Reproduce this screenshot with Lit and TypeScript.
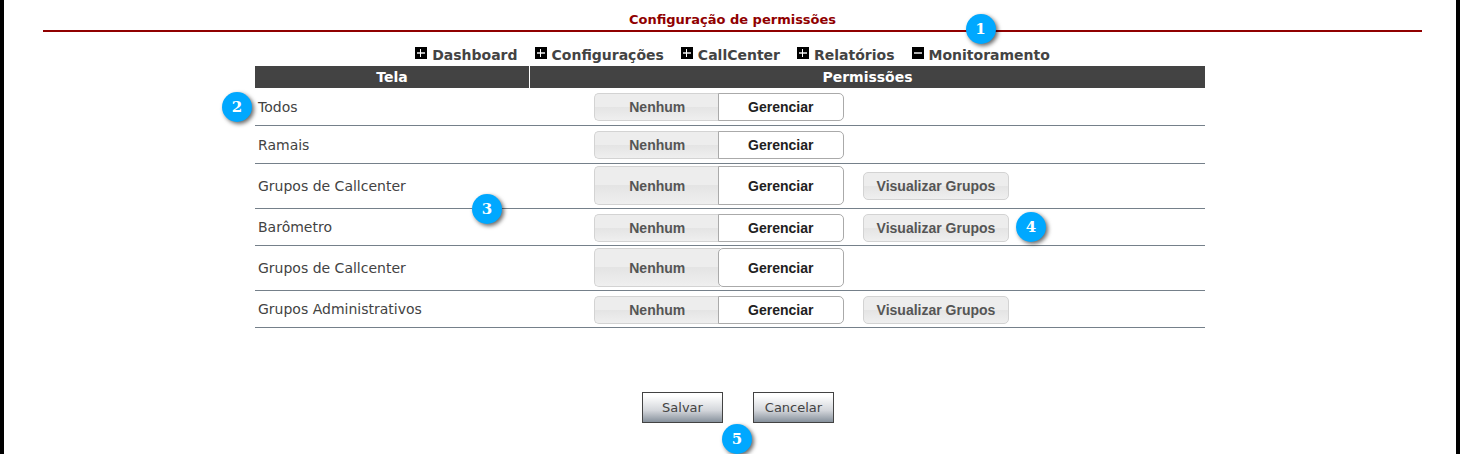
import { LitElement, html, svg, css, nothing } from "lit";
import { customElement, property, state } from "lit/decorators.js";
import { classMap } from "lit/directives/class-map.js";

interface Row {
  id: string;
  label: string;
  groups?: boolean;
  size?: "compact" | "tall";
  detached?: boolean;
  mark?: number;
}

const TABS = ["Dashboard", "Configurações", "CallCenter", "Relatórios", "Monitoramento"];

const ROWS: Row[] = [
  { id: "todos", label: "Todos", mark: 2 },
  { id: "ramais", label: "Ramais" },
  { id: "callcenter", label: "Grupos de Callcenter", size: "tall", groups: true, mark: 3 },
  { id: "barometro", label: "Barômetro", size: "compact", groups: true, mark: 4 },
  { id: "barometro-grupos", label: "Grupos de Callcenter", size: "tall", detached: true },
  { id: "administrativos", label: "Grupos Administrativos", size: "compact", groups: true },
];

@customElement("step-mark")
export class StepMark extends LitElement {
  @property({ type: Number }) value = 1;

  static styles = css`
    :host {
      display: block;
      width: 30px;
      height: 30px;
      border-radius: 50%;
      background: #00a8ff;
      box-shadow: 2px 2px 4px rgba(0, 0, 0, 0.6);
      color: #fff;
      font: bold 15px/30px "DejaVu Serif", serif;
      text-align: center;
    }
  `;

  render() {
    return html`${this.value}`;
  }
}

@customElement("permission-toggle")
export class PermissionToggle extends LitElement {
  @property() name = "";
  @property({ type: Boolean }) tall = false;
  @property({ type: Boolean }) detached = false;
  @state() private value = "Gerenciar";

  static styles = css`
    :host {
      display: block;
    }
    .set {
      display: flex;
      width: 250px;
      height: 28px;
      margin: 0;
      padding: 0;
      border: 0;
    }
    .set.tall {
      height: 39px;
    }
    .option {
      position: relative;
      display: flex;
      flex: 1;
      align-items: center;
      justify-content: center;
      box-sizing: border-box;
      border: 1px solid #d3d3d3;
      background: linear-gradient(#ededed 50%, #e4e4e4 50%, #efefef);
      color: #555;
      font: bold 14px/18px "Liberation Sans", Arial, sans-serif;
      cursor: pointer;
    }
    .option:first-child {
      border-radius: 5px 0 0 5px;
      border-right: 0;
    }
    .option:last-child {
      margin-left: -2px;
      border-radius: 0 5px 5px 0;
    }
    .detached .option:last-child {
      border-radius: 5px;
    }
    .option.on {
      border-color: #aaa;
      background: #fff;
      color: #212121;
    }
    .radio {
      position: absolute;
      inset: 0;
      margin: 0;
      opacity: 0;
      cursor: pointer;
    }
  `;

  render() {
    return html`<fieldset
      class=${classMap({ set: true, tall: this.tall, detached: this.detached })}
    >
      ${["Nenhum", "Gerenciar"].map(
        (v) => html`<label class=${classMap({ option: true, on: this.value === v })}
          ><input
            class="radio"
            type="radio"
            name=${this.name}
            .checked=${this.value === v}
            @change=${() => (this.value = v)}
          />${v}</label
        >`,
      )}
    </fieldset>`;
  }
}

@customElement("app-root")
export class AppRoot extends LitElement {
  @state() private open = "Monitoramento";

  static styles = css`
    :host {
      display: block;
      box-sizing: border-box;
      min-height: 100vh;
      overflow: hidden;
      border: solid #000;
      border-width: 0 4px;
      background: #fff;
      color: #434343;
      font: 14px/20px "DejaVu Sans", Verdana, sans-serif;
    }
    .head {
      margin: 0 34px 0 39px;
    }
    .title {
      margin: 0;
      padding: 10px 0 0;
      border-bottom: 2px solid #900000;
      color: #900000;
      font-size: 13px;
      line-height: 20px;
      text-align: center;
    }
    .tabs {
      display: flex;
      flex-wrap: wrap;
      justify-content: center;
      gap: 17px;
      padding: 13px 0 1px;
    }
    .tab {
      position: relative;
      display: flex;
      align-items: flex-start;
      gap: 5px;
      padding: 0;
      border: 0;
      background: none;
      color: inherit;
      font: bold 14px/20px "DejaVu Sans", Verdana, sans-serif;
      cursor: pointer;
    }
    .sign {
      display: block;
      width: 12px;
      height: 12px;
      margin-top: 2px;
    }
    .mark {
      position: absolute;
    }
    .mark-1 {
      left: 54px;
      top: -31px;
    }
    .mark-2 {
      left: -33px;
      top: 4px;
    }
    .mark-3 {
      right: 27px;
      bottom: -16px;
    }
    .mark-4 {
      left: 153px;
      top: -2px;
    }
    .mark-5 {
      left: 80px;
      top: 32px;
    }
    .grid {
      width: 950px;
      max-width: 100%;
      margin: 0 auto;
      border-collapse: separate;
      border-spacing: 0;
      table-layout: fixed;
    }
    .col-name {
      width: 274px;
    }
    .th {
      height: 22px;
      padding: 0;
      background: #434343;
      color: #fff;
      font-weight: bold;
    }
    .th + .th {
      border-left: 1px solid #fff;
    }
    .name,
    .perm {
      border-bottom: 1px solid #75808a;
      text-align: left;
      font-weight: normal;
    }
    .name {
      position: relative;
      padding: 0 3px;
    }
    .perm {
      padding: 5px 0 4px 65px;
    }
    .compact .perm {
      padding-bottom: 3px;
    }
    .tall .perm {
      padding-top: 2px;
      padding-bottom: 3px;
    }
    .controls {
      display: flex;
      align-items: center;
      gap: 19px;
    }
    .anchor {
      position: relative;
    }
    .groups {
      display: block;
      width: 146px;
      height: 28px;
      padding: 0;
      border: 1px solid #d3d3d3;
      border-radius: 5px;
      background: linear-gradient(#ededed 50%, #e4e4e4 50%, #efefef);
      color: #555;
      font: bold 14px/18px "Liberation Sans", Arial, sans-serif;
      cursor: pointer;
    }
    .foot {
      display: flex;
      justify-content: center;
      padding: 64px 0 31px 16px;
    }
    .actions {
      position: relative;
      display: flex;
      gap: 30px;
    }
    .action {
      width: 81px;
      height: 31px;
      padding: 0;
      border: 1px solid #434343;
      background: linear-gradient(#fff 10%, #d3d6db 60%, #87919c);
      color: #434343;
      font: 13px/20px "DejaVu Sans", Verdana, sans-serif;
      cursor: pointer;
    }
  `;

  private sign(expanded: boolean) {
    return html`<svg class="sign" viewBox="0 0 12 12" shape-rendering="crispEdges" aria-hidden="true">
      <rect width="12" height="12" fill="#000" />
      <rect x="2" y="5" width="8" height="2" fill="#b4b4b4" />
      ${expanded ? nothing : svg`<rect x="5" y="2" width="1" height="8" fill="#fff" />`}
    </svg>`;
  }

  private tab(name: string) {
    const expanded = this.open === name;
    return html`<button
      class="tab"
      type="button"
      aria-expanded=${String(expanded)}
      @click=${() => (this.open = name)}
    >
      ${this.sign(expanded)}<span>${name}</span>
      ${name === "Monitoramento"
        ? html`<step-mark class="mark mark-1" .value=${1}></step-mark>`
        : nothing}
    </button>`;
  }

  private row(r: Row) {
    return html`<tr class=${r.size ?? "regular"}>
      <th class="name" scope="row">
        ${r.label}
        ${r.mark === 2 || r.mark === 3
          ? html`<step-mark class="mark mark-${r.mark}" .value=${r.mark}></step-mark>`
          : nothing}
      </th>
      <td class="perm">
        <div class="controls">
          <permission-toggle
            name=${r.id}
            role="group"
            aria-label=${r.label}
            ?tall=${r.size === "tall"}
            ?detached=${!!r.detached}
          ></permission-toggle>
          ${r.groups
            ? html`<div class="anchor">
                <button class="groups" type="button">Visualizar Grupos</button>
                ${r.mark === 4
                  ? html`<step-mark class="mark mark-4" .value=${4}></step-mark>`
                  : nothing}
              </div>`
            : nothing}
        </div>
      </td>
    </tr>`;
  }

  render() {
    return html`
      <header class="head">
        <h1 class="title">Configuração de permissões</h1>
        <nav class="tabs">${TABS.map((t) => this.tab(t))}</nav>
      </header>
      <table class="grid">
        <colgroup>
          <col class="col-name" />
          <col />
        </colgroup>
        <thead>
          <tr>
            <th class="th" scope="col">Tela</th>
            <th class="th" scope="col">Permissões</th>
          </tr>
        </thead>
        <tbody>
          ${ROWS.map((r) => this.row(r))}
        </tbody>
      </table>
      <footer class="foot">
        <div class="actions">
          <button class="action" type="button">Salvar</button>
          <button class="action" type="button">Cancelar</button>
          <step-mark class="mark mark-5" .value=${5}></step-mark>
        </div>
      </footer>
    `;
  }
}
